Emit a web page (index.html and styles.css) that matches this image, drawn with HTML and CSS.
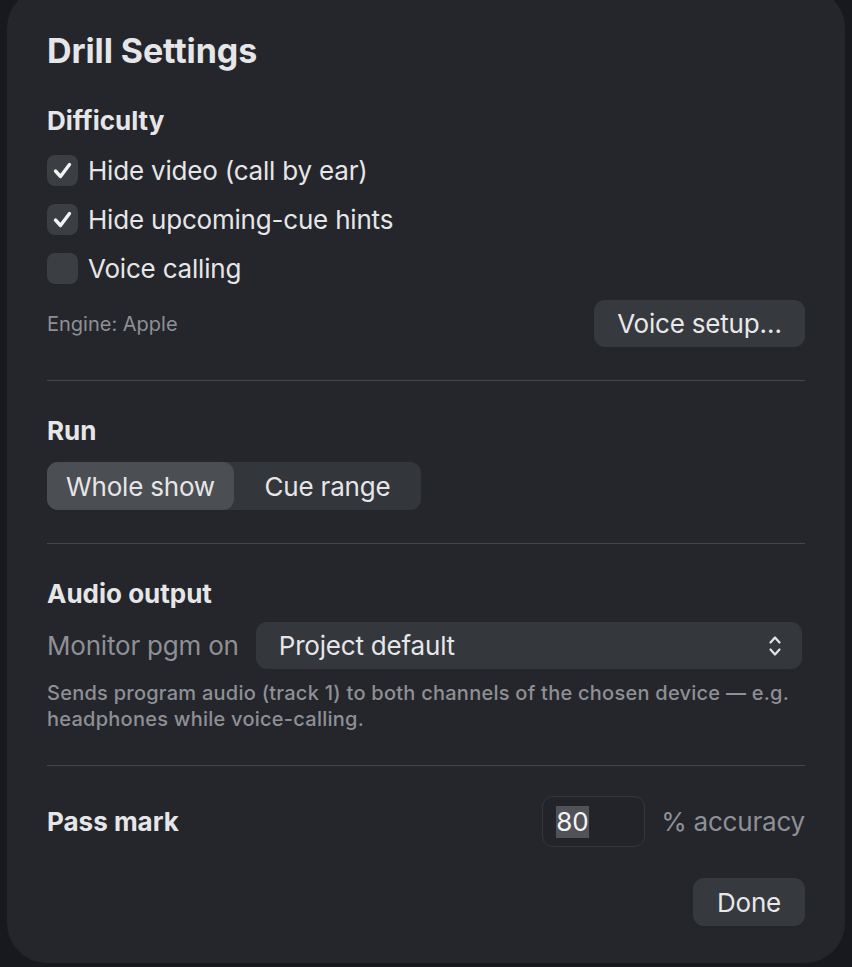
FILE: index.html
```html
<!DOCTYPE html>
<html lang="en">
<head>
    <meta charset="UTF-8">
    <title>Drill Settings</title>
    <link rel="stylesheet" href="styles.css">
</head>
<body>
    <div class="sheet">
        <h1 class="title">Drill Settings</h1>

        <!-- Difficulty -->
        <h2 class="section-title first">Difficulty</h2>
        <div class="check-list">
            <label class="check-row">
                <span class="check-box">
                    <svg width="31" height="31" viewBox="0 0 31 31"><polyline points="8.5,16 13.5,21.5 22.5,9.5" fill="none" stroke="#f2f2f3" stroke-width="3.4" stroke-linecap="round" stroke-linejoin="round"/></svg>
                </span>
                Hide video (call by ear)
            </label>
            <label class="check-row">
                <span class="check-box">
                    <svg width="31" height="31" viewBox="0 0 31 31"><polyline points="8.5,16 13.5,21.5 22.5,9.5" fill="none" stroke="#f2f2f3" stroke-width="3.4" stroke-linecap="round" stroke-linejoin="round"/></svg>
                </span>
                Hide upcoming-cue hints
            </label>
            <label class="check-row">
                <span class="check-box"></span>
                Voice calling
            </label>
        </div>
        <div class="engine-row">
            <span class="small-note">Engine: Apple</span>
            <button class="push-button voice-button">Voice setup…</button>
        </div>

        <hr class="divider">

        <!-- Run -->
        <h2 class="section-title">Run</h2>
        <div class="segmented">
            <span class="segment selected">Whole show</span>
            <span class="segment">Cue range</span>
        </div>

        <hr class="divider">

        <!-- Audio output -->
        <h2 class="section-title">Audio output</h2>
        <div class="popup-row">
            <span class="field-label">Monitor pgm on</span>
            <div class="popup">
                <span>Project default</span>
                <svg class="popup-arrows" width="14" height="24" viewBox="0 0 14 24"><polyline points="2.5,8.5 7,3.5 11.5,8.5" fill="none" stroke="#e4e4e6" stroke-width="2.2" stroke-linecap="round" stroke-linejoin="round"/><polyline points="2.5,15.5 7,20.5 11.5,15.5" fill="none" stroke="#e4e4e6" stroke-width="2.2" stroke-linecap="round" stroke-linejoin="round"/></svg>
            </div>
        </div>
        <p class="help-text">Sends program audio (track 1) to both channels of the chosen device — e.g. headphones while voice-calling.</p>

        <hr class="divider">

        <!-- Pass mark -->
        <div class="pass-row">
            <span class="section-title inline">Pass mark</span>
            <div class="pass-field">
                <div class="number-field"><span class="selected-text">80</span></div>
                <span class="field-label">% accuracy</span>
            </div>
        </div>

        <div class="footer-row">
            <button class="push-button done-button">Done</button>
        </div>
    </div>
</body>
</html>
```

FILE: styles.css
```css
body {
    margin: 0;
    padding: 0;
    height: 967px;
    overflow: hidden;
    background-color: #18191f;
    font-family: Inter, "Noto Sans", sans-serif;
    color: #e6e6e8;
}

.sheet {
    box-sizing: border-box;
    width: 838px;
    height: 975px;
    margin: -12px 0 0 7px;
    padding: 43px 40px 0 40px;
    background-color: #24262b;
    border-radius: 40px;
}

.title {
    margin: 0;
    font-size: 34px;
    line-height: 40px;
    font-weight: 700;
    letter-spacing: -0.1px;
}

.section-title {
    margin: 34px 0 0 0;
    font-size: 26px;
    line-height: 32px;
    font-weight: 700;
}

.section-title.first {
    margin-top: 34px;
}

.section-title.inline {
    margin: 0;
}

.check-list {
    margin-top: 9px;
}

.check-row {
    display: flex;
    align-items: center;
    height: 49px;
    font-size: 26px;
    line-height: 32px;
    letter-spacing: -0.2px;
}

.check-box {
    width: 31px;
    height: 31px;
    margin-right: 10px;
    border-radius: 8px;
    background-color: #3b3e43;
}

.check-box svg {
    display: block;
}

.engine-row {
    display: flex;
    justify-content: space-between;
    align-items: center;
    margin-top: 7px;
}

.small-note {
    font-size: 20px;
    color: #8e9095;
}

.push-button {
    height: 47px;
    border: none;
    border-radius: 11px;
    background-color: #36393e;
    color: #e8e8ea;
    font-family: Inter, "Noto Sans", sans-serif;
    font-size: 26px;
    letter-spacing: -0.2px;
    white-space: nowrap;
    padding: 0;
}

.voice-button {
    width: 211px;
}

.done-button {
    width: 112px;
    height: 48px;
}

.divider {
    margin: 33px 0 0 0;
    border: none;
    height: 1px;
    background-color: #43464b;
}

.segmented {
    display: inline-flex;
    margin-top: 15px;
    height: 48px;
    border-radius: 11px;
    background-color: #33363b;
}

.segment {
    display: flex;
    align-items: center;
    justify-content: center;
    width: 187px;
    font-size: 26px;
    letter-spacing: -0.2px;
    border-radius: 11px;
}

.segment.selected {
    background-color: #4b4e53;
}

.popup-row {
    display: flex;
    align-items: center;
    margin-top: 12px;
}

.field-label {
    font-size: 26px;
    letter-spacing: -0.2px;
    color: #8e9095;
}

.popup {
    display: flex;
    align-items: center;
    justify-content: space-between;
    flex: 1;
    height: 47px;
    margin: 0 3px 0 17px;
    padding: 0 20px 0 23px;
    border-radius: 11px;
    background-color: #34373c;
    font-size: 26px;
    letter-spacing: -0.2px;
}

.help-text {
    margin: 11px 0 0 0;
    font-size: 20px;
    line-height: 26px;
    font-weight: 500;
    letter-spacing: 0.25px;
    color: #8e9095;
}

.pass-row {
    display: flex;
    justify-content: space-between;
    align-items: center;
    margin-top: 30px;
}

.pass-field {
    display: flex;
    align-items: center;
    gap: 16px;
}

.number-field {
    box-sizing: border-box;
    display: flex;
    align-items: center;
    width: 103px;
    height: 51px;
    padding-left: 13px;
    border: 1.5px solid #34373c;
    border-radius: 11px;
    background-color: #222429;
    font-size: 26px;
}

.selected-text {
    background-color: #505257;
    color: #f4f4f5;
    line-height: 32px;
}

.footer-row {
    display: flex;
    justify-content: flex-end;
    margin-top: 31px;
}
```
